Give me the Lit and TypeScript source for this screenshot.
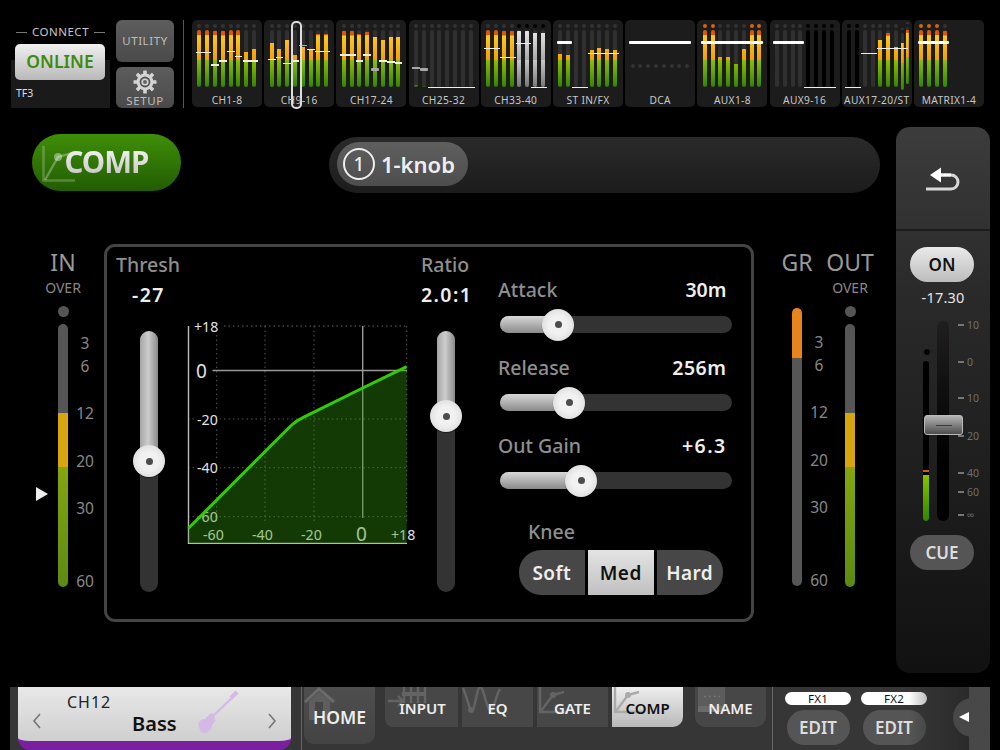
import { LitElement, html, css, svg } from "lit";
import { customElement } from "lit/decorators.js";

type Fader = [number, number, number, number?, number?]; // col, span, y(3x), thick, gray
interface Strip { name: string; tops: (number | null)[]; faders: Fader[]; kinds?: string; dots?: string; narrow?: boolean; sel?: boolean; dca?: boolean; }

const strips: Strip[] = [
  { name: "CH1-8", tops: [90, 90, 93, 92, 90, 90, 155, 147], faders: [[0, 2, 157], [2, 1, 195], [3, 1, 183], [4, 1, 154], [5, 1, 169], [6, 2, 183]] },
  { name: "CH9-16", tops: [127, 147, 120, 165, 141, 149, 102, 102], faders: [[0, 1, 178], [1, 1, 172], [2, 1, 191], [3, 1, 183], [4, 1, 136, 0, 1], [5, 1, 148], [6, 2, 154]], sel: true },
  { name: "CH17-24", tops: [92, 92, 102, 96, 109, 120, 109, 109], faders: [[0, 2, 165], [2, 1, 183], [3, 1, 165], [4, 1, 209, 1, 1], [5, 1, 183], [6, 1, 186], [7, 1, 189]] },
  { name: "CH25-32", tops: [255, 258, null, null, null, null, null, null], faders: [[0, 1, 204, 0, 1], [1, 1, 209, 1, 1], [2, 6, 262]] },
  { name: "CH33-40", tops: [90, 90, 92, 92, 92, 92, 97, 97], kinds: "....wwww", dots: "....kkkk", faders: [[0, 2, 145], [2, 2, 172], [4, 2, 130], [6, 2, 262]] },
  { name: "ST IN/FX", tops: [162, 165, null, null, 148, 142, 147, 150], faders: [[0, 2, 128, 1], [2, 2, 262], [4, 4, 160]] },
  { name: "DCA", tops: [], faders: [[0, 8, 128, 1]], dca: true },
  { name: "AUX1-8", tops: [90, 90, 171, 171, 190, 147, 90, 90], dots: "oo....oo", faders: [[0, 8, 128, 1]] },
  { name: "AUX9-16", tops: [null, null, null, null, null, null, null, null], kinds: "....kkkk", dots: "....kkkk", faders: [[0, 4, 128, 1], [4, 4, 262]] },
  { name: "AUX17-20/ST", tops: [null, null, null, null, 120, 97, 141, 120, 97], kinds: "kk.......", dots: "kk.......", narrow: true, faders: [[0, 2, 262], [2, 2, 160], [4, 4, 145]] },
  { name: "MATRIX1-4", tops: [90, 90, 90, 92], dots: "ooo.", faders: [[0, 4, 128, 1]] },
];

const ticks = [
  ["10", 4], ["0", 41], ["10", 77], ["20", 115], ["40", 152], ["60", 171], ["∞", 194],
] as [string, number][];

const grScale = [["3", 19], ["6", 42], ["12", 89], ["20", 137], ["30", 184], ["60", 257]] as [string, number][];

@customElement("app-root")
export class AppRoot extends LitElement {
  static styles = css`
    :host { display: block; width: 1000px; height: 750px; background: #000; overflow: hidden; font-family: "Noto Sans", "Open Sans", sans-serif; color: #fff; }
    .root { width: 1000px; height: 750px; display: flex; flex-direction: column; }
    /* top bar */
    .top { display: flex; height: 88px; padding: 20px 16px 0 11px; flex: none; }
    .connect { width: 99px; height: 88px; display: flex; flex-direction: column; align-items: center; background: linear-gradient(#000 40px, #1a1a1a 40px); position: relative; }
    .conn-label { margin-top: 5px; height: 14px; line-height: 14px; font-size: 11.5px; color: #c8c8c8; letter-spacing: .5px; display: flex; align-items: center; gap: 5px; }
    .conn-label i { display: block; width: 11px; height: 1px; background: #777; }
    .online { margin: 5px 1px 0 0; width: 90px; height: 36px; border-radius: 5px; background: linear-gradient(#f0f0f0, #b9b9b9); color: #3f8a10; font-weight: 600; font-size: 17.5px; line-height: 35px; text-align: center; }
    .tf3 { align-self: flex-start; margin: 6px 0 0 5px; font-size: 10.5px; line-height: 14px; color: #ddd; }
    .utilcol { width: 58px; margin-left: 6px; display: flex; flex-direction: column; gap: 5px; }
    .util { border-radius: 6px; background: linear-gradient(#5d5d5d, #4a4a4a); color: #bdbdbd; font-size: 11.5px; letter-spacing: .6px; text-align: center; }
    .u1 { height: 42px; line-height: 42px; }
    .u2 { height: 41px; display: flex; flex-direction: column; align-items: center; line-height: 13px; }
    .u2 svg { margin-top: 3px; display: block; }
    .vsep { width: 1px; height: 88px; background: #555; margin: 0 8px 0 9px; }
    .strips { flex: 1; display: grid; grid-template-columns: repeat(11, 1fr); gap: 2.2px; }
    .tile { position: relative; height: 87px; background: #1c1c1c; border-radius: 5px; box-sizing: border-box; padding: 4px 0 0 5.4px; }
    .cols { display: flex; gap: 3.8px; height: 63px; }
    .col { width: 4px; flex: none; display: flex; flex-direction: column; align-items: center; }
    .dot { width: 4px; height: 4px; border-radius: 50%; background: #333; flex: none; }
    .dot.k { background: #000; }
    .dot.o { background: #d9620a; }
    .dca-dot { margin-top: 39.7px; }
    .m { margin-top: 2px; width: 4px; height: 57px; border-radius: 2px; background: #303030; position: relative; overflow: hidden; flex: none; }
    .m.k { background: #000; }
    .m i { position: absolute; left: 0; right: 0; bottom: 0; display: block; background: linear-gradient(to top, #338400 0, #8cc000 27px, #f2a000 27px, #ffc820 51px, #d95a05 52px, #d95a05 57px) bottom / 100% 57px no-repeat; }
    .m.w i { background: linear-gradient(to top, #777 0, #c8c8c8 27px, #a8a8a8 27px, #e8e8e8 57px) bottom / 100% 57px no-repeat; }
    .col.n { width: 2.6px; }
    .col.n .m { width: 2.6px; }
    .col.n .dot { width: 2.6px; height: 2.6px; margin-top: .7px; margin-bottom: .7px; }
    .col.n2 { margin-left: -1.2px; }
    .col.n1 { margin-left: -.8px; }
    .fad { position: absolute; background: #eee; height: 1.5px; }
    .fad.t { height: 3.4px; background: #fff; border-radius: 1px; }
    .fad.g { background: #a8a8a8; }
    .sel { position: absolute; left: 27px; top: .5px; width: 7px; height: 84px; border: 2px solid #ddd; border-radius: 5px; box-sizing: content-box; }
    .tname { position: absolute; left: 0; right: 0; top: 72px; text-align: center; font-size: 10.2px; line-height: 16px; letter-spacing: .35px; color: #c8c8c8; white-space: nowrap; }
    /* main */
    .main { flex: none; height: 579px; display: flex; }
    .left { width: 896px; display: flex; flex-direction: column; }
    .hdr { height: 137px; display: flex; align-items: flex-start; flex: none; box-sizing: border-box; padding: 26px 0 0 32px; }
    .comp { position: relative; width: 149px; height: 57px; border-radius: 29px; background: linear-gradient(#3f8f08, #225c03); flex: none; }
    .comp svg { position: absolute; left: 0; top: 0; }
    .comp b { position: absolute; left: 32.5px; top: 7px; font-size: 29.5px; line-height: 42px; font-weight: 700; letter-spacing: -1px; background: linear-gradient(#fff, #bbb); -webkit-background-clip: text; background-clip: text; color: transparent; }
    .pill { margin: 3px 0 0 148px; width: 551px; height: 56px; border-radius: 28px; background: linear-gradient(#2a2a2a, #1c1c1c); box-sizing: border-box; padding: 5px 8px; }
    .knobbtn { width: 131px; height: 44px; border-radius: 22px; background: linear-gradient(#5f5f5f, #4d4d4d); display: flex; align-items: center; padding-left: 6px; box-sizing: border-box; gap: 6px; font-size: 22px; font-weight: 600; color: #eee; }
    .ring { width: 28px; height: 28px; border: 2px solid #eee; border-radius: 50%; text-align: center; line-height: 28px; font-size: 19px; font-weight: 500; }
    .body { display: flex; height: 376px; }
    .vucol { display: flex; flex-direction: column; align-items: center; flex: none; position: relative; }
    .vu-in { width: 62px; margin-left: 32px; margin-right: 10px; }
    .vu-gr { width: 53px; margin-left: 16.5px; }
    .vu-out { width: 53px; }
    .gr-gap { height: 33px; flex: none; }
    .big { font-size: 23px; line-height: 26px; margin-top: 4px; color: #999; }
    .over { font-size: 14px; line-height: 18px; margin-top: 4px; color: #888; }
    .ovd { width: 11px; height: 11px; border-radius: 50%; background: #555; margin-top: 9px; flex: none; }
    .vu { margin-top: 7px; width: 10px; height: 263px; border-radius: 5px; overflow: hidden; flex: none; background: linear-gradient(#565656 89px, #d6a50f 89px, #d6a50f 143px, #84a510 143px, #5c8a12 263px); }
    .vuwrap { position: relative; width: 10px; }
    .sc { position: absolute; left: 15px; width: 24px; text-align: center; font-size: 15.5px; line-height: 18px; color: #888; transform: translateY(-9px); }
    .vu.gr { margin-top: 0; height: 278px; background: linear-gradient(#e8841c 50px, #565656 50px); }
    .arrow { position: absolute; left: -22px; top: 170px; width: 0; height: 0; border-left: 12px solid #eee; border-top: 7px solid transparent; border-bottom: 7px solid transparent; }
    .panel { width: 650px; height: 378px; margin-top: -1px; box-sizing: border-box; border: 3px solid #444; border-radius: 11px; flex: none; display: flex; padding-left: 9px; }
    .p-col { flex: none; display: flex; flex-direction: column; }
    .p-lab { font-size: 19.5px; line-height: 24px; color: #8f8f8f; font-weight: 500; white-space: nowrap; }
    .p-val { font-size: 19.5px; line-height: 24px; color: #eee; font-weight: 600; letter-spacing: .5px; white-space: nowrap; }
    .p-val.wide { letter-spacing: 1.4px; }
    .p-val.tight { letter-spacing: 0; }
    .c-th { width: 66px; }
    .c-ra { width: 50px; margin-left: 11px; }
    .c-ri { width: 234px; margin-left: 27px; padding-top: 31px; }
    .top-lab { margin-top: 6px; }
    .th-val { margin: 6px 0 24px 16px; }
    .ra-val { margin: 6px 0 24px 0; }
    .th-sl { margin-left: 24px; }
    .ra-sl { margin-left: 16px; }
    .g-wrap { margin: 79px 0 0 6px; flex: none; width: 222px; }
    .g-wrap svg { overflow: visible; display: block; font-family: inherit; }
    .vs { position: relative; width: 18px; height: 261px; border-radius: 9px; background: #333; flex: none; }
    .vs .fill { position: absolute; left: 0; right: 0; top: 0; border-radius: 9px 9px 0 0; background: linear-gradient(90deg, #a5a5a5, #cdcdcd 45%, #8a8a8a); }
    .knob { position: absolute; width: 32px; height: 32px; border-radius: 50%; background: radial-gradient(circle at 50% 50%, #f1f1f1 40%, #e4e4e4 65%, #c6c6c6); transform: translate(-50%, -50%); box-shadow: 0 1px 1px #0006; display: flex; align-items: center; justify-content: center; }
    .knob::after { content: ""; display: block; width: 7px; height: 7px; border-radius: 50%; background: #4c4c4c; }
    .hs { position: relative; width: 232px; height: 17px; border-radius: 8.5px; background: #333; margin: 14px 0 0 2px; }
    .hs .fill { position: absolute; left: 0; top: 0; bottom: 0; border-radius: 8.5px 0 0 8.5px; background: linear-gradient(#d8d8d8, #8a8a8a); }
    .hrow { display: flex; justify-content: space-between; padding-right: 5.5px; }
    .hrow.next { margin-top: 23px; }
    .knee-lab { margin: 31px 0 0 30px; }
    .knee { display: flex; margin: 6px 0 0 21px; gap: 3.5px; height: 45px; }
    .knee div { width: 65.5px; text-align: center; line-height: 46px; font-size: 19px; font-weight: 600; letter-spacing: .4px; background: #474747; color: #eee; }
    .knee .a { border-radius: 22px 0 0 22px; }
    .knee .b { background: linear-gradient(#e4e4e4, #c0c0c0); color: #111; }
    .knee .c { border-radius: 0 22px 22px 0; }
    /* side */
    .side { width: 94px; height: 546px; margin-top: 19px; border-radius: 14px; background: linear-gradient(#3c3c3c, #2a2a2a 30%, #111); display: flex; flex-direction: column; align-items: center; flex: none; }
    .back { height: 102px; box-sizing: border-box; padding-top: 4px; display: flex; align-items: center; justify-content: center; flex: none; width: 94px; }
    .sdiv { width: 94px; height: 2px; background: #1c1c1c; flex: none; }
    .on { margin: 16px 2px 0 0; width: 64px; height: 35px; border-radius: 18px; background: linear-gradient(#eaeaea, #bdbdbd); color: #111; text-align: center; line-height: 35px; font-size: 17px; font-weight: 600; flex: none; }
    .sval { margin-top: 6px; font-size: 14.5px; line-height: 18px; color: #e6e6e6; letter-spacing: .2px; }
    .fadbox { position: relative; width: 94px; height: 200px; margin-top: 15px; flex: none; }
    .fdot { position: absolute; left: 27.5px; top: 28px; width: 6px; height: 6px; border-radius: 50%; background: #000; }
    .fmeter { position: absolute; left: 27px; top: 40px; width: 6px; height: 160px; border-radius: 3px; background: #000; overflow: hidden; }
    .fmeter i { position: absolute; left: 0; right: 0; bottom: 0; height: 46px; display: block; background: linear-gradient(#86c400, #338400); }
    .fmeter u { position: absolute; left: 0; right: 0; bottom: 49px; height: 2px; display: block; background: #c9600d; }
    .ftrack { position: absolute; left: 41px; top: 0; width: 12px; height: 200px; border-radius: 6px; background: linear-gradient(#201e1e, #000 70%); }
    .cap { position: absolute; left: 28px; top: 94px; width: 39px; height: 20px; box-sizing: border-box; border: 1.5px solid #bbb; border-radius: 3px; background: linear-gradient(#b5b5b5, #4d4d4d); display: flex; align-items: center; justify-content: center; }
    .cap::after { content: ""; display: block; width: 16px; height: 1px; background: #3d3d3d; }
    .tk { position: absolute; left: 62px; display: flex; align-items: center; gap: 3px; font-size: 10.5px; line-height: 12px; color: #6f6f6f; transform: translateY(-6px); }
    .tk i { display: block; width: 6px; height: 2px; background: #777; }
    .cue { margin: 14px 2px 0 0; width: 64px; height: 35px; border-radius: 18px; background: #555; color: #ddd; text-align: center; line-height: 36px; font-size: 17px; font-weight: 600; flex: none; }
    /* bottom */
    .bar { margin-left: 10px; width: 980px; height: 63px; flex: none; display: flex; background: #363636; position: relative; overflow: hidden; }
    .select { margin-left: 8px; width: 273px; height: 63px; box-sizing: border-box; border-radius: 0 0 12px 12px; background: linear-gradient(#e8e8e8, #cfcfcf); border-bottom: 9px solid #7a1fa0; position: relative; color: #111; flex: none; display: flex; align-items: center; justify-content: space-between; padding: 14px 14px 0; }
    .names { flex: 1; align-self: stretch; margin-top: -14px; display: flex; flex-direction: column; }
    .n1 { margin: 3px 0 0 25px; font-size: 16px; line-height: 24px; letter-spacing: 1px; color: #222; }
    .n2 { margin: -3px 0 0 90px; font-size: 20px; line-height: 26px; font-weight: 600; }
    .gtr { position: absolute; left: 178px; top: 0; }
    .b-sep { width: 1px; height: 63px; background: #666; flex: none; }
    .sep1 { margin-left: 10px; }
    .sep2 { margin-left: 6px; }
    .home { margin-left: 2px; position: relative; width: 71px; height: 57px; border-radius: 0 0 10px 10px; background: linear-gradient(#4e4e4e, #444); flex: none; font-size: 17.5px; font-weight: 600; text-align: center; line-height: 60px; color: #eee; }
    .home span, .tab span { position: relative; }
    .ic { position: absolute; left: 0; top: 0; }
    .tabs { margin-left: 10px; display: flex; gap: 4px; flex: none; }
    .tab { position: relative; width: 71px; height: 40px; background: #474747; font-size: 15px; font-weight: 600; color: #eee; text-align: center; line-height: 43px; }
    .tab.first { width: 73px; border-radius: 0 0 0 8px; padding-left: 2px; box-sizing: border-box; }
    .tab.active { background: linear-gradient(#eee, #b9b9b9); color: #111; border-radius: 0 0 10px 0; }
    .tab.nm { margin-left: 12px; border-radius: 0 0 10px 10px; flex: none; }
    .fx { width: 66px; margin-left: 12px; display: flex; flex-direction: column; align-items: center; flex: none; }
    .fx + .fx { margin-left: 10px; }
    .fxp { margin-top: 5px; width: 66px; height: 13px; border-radius: 7px; background: #fff; color: #111; font-size: 11.5px; line-height: 14px; text-align: center; letter-spacing: .3px; }
    .edit { margin-top: 5px; width: 63px; height: 35px; border-radius: 18px; background: #555; color: #ddd; text-align: center; line-height: 35px; font-size: 17px; font-weight: 600; }
    .handle { position: absolute; right: 0; top: 0; width: 21px; height: 63px; background: #484848; }
    .shade { position: absolute; right: 21px; top: 0; width: 60px; height: 63px; background: linear-gradient(90deg, transparent, #2a2a2a); }
    .circle { position: absolute; right: -2px; top: 11px; width: 39px; height: 39px; border-radius: 50%; background: #484848; }
    .tri { position: absolute; right: 21px; top: 24.5px; width: 0; height: 0; border-right: 10px solid #fff; border-top: 5.5px solid transparent; border-bottom: 5.5px solid transparent; }
  `;

  private strip(s: Strip) {
    const n = s.dca ? 8 : s.tops.length;
    const narrowStart = s.narrow ? 7 : 99;
    const cols = Array.from({ length: n }, (_, i) => {
      if (s.dca) return html`<div class="col"><div class="dot dca-dot"></div></div>`;
      const top = s.tops[i];
      const kind = s.kinds?.[i] ?? ".";
      const d = s.dots?.[i] ?? ".";
      const cls = i >= narrowStart ? (i === narrowStart ? "col n n1" : "col n n2") : "col";
      return html`<div class=${cls}>
        <div class="dot ${d === "." ? "" : d}"></div>
        <div class="m ${kind === "." ? "" : kind}">${top === null ? "" : html`<i style="height:${((260 - top) / 3).toFixed(1)}px"></i>`}</div>
      </div>`;
    });
    return html`<div class="tile">
      <div class="cols">${cols}</div>
      ${s.faders.map(([c, span, y, thick, gray]) => html`<div class="fad ${thick ? "t" : ""} ${gray ? "g" : ""}"
        style="left:${(3.7 + 7.8 * c).toFixed(1)}px;width:${(7.8 * span).toFixed(1)}px;top:${(y / 3 - 20 - (thick ? 1.7 : 0.75)).toFixed(1)}px"></div>`)}
      ${s.sel ? html`<div class="sel"></div>` : ""}
      <div class="tname">${s.name}</div>
    </div>`;
  }

  private gear() {
    const teeth = Array.from({ length: 8 }, (_, i) => svg`<rect x="10.2" y="0.5" width="3.6" height="5" rx=".6" fill="#d4d4d4" transform="rotate(${i * 45} 12 12)"/>`);
    return html`<svg width="24" height="24" viewBox="0 0 24 24">${teeth}<circle cx="12" cy="12" r="8.4" fill="#d4d4d4"/><circle cx="12" cy="12" r="5.4" fill="#555"/><circle cx="12" cy="12" r="3.6" fill="#d4d4d4"/><circle cx="12" cy="12" r="2" fill="#666"/></svg>`;
  }

  private graph() {
    const vLines = [216.7, 265, 314, 406.7];
    const hLines = [419, 467.7, 516.7];
    const lab = "#e2e2e2";
    return html`<svg width="222" height="220" viewBox="188 326 222 220">
      ${vLines.map((x) => svg`<line x1=${x} x2=${x} y1="326" y2="522" stroke="#555" stroke-width="1" stroke-dasharray="1.5 3"/>`)}
      ${hLines.map((y) => svg`<line x1="188" x2="407" y1=${y} y2=${y} stroke="#555" stroke-width="1" stroke-dasharray="1.5 3"/>`)}
      <line x1="224" x2="407" y1="326" y2="326" stroke="#666" stroke-dasharray="1.5 3"/>
      <line x1="188.5" x2="188.5" y1="326" y2="544" stroke="#bbb" stroke-width="1.4"/>
      <line x1="212.5" x2="407" y1="370.5" y2="370.5" stroke="#999" stroke-width="1.4"/>
      <line x1="362.7" x2="362.7" y1="326" y2="518" stroke="#999" stroke-width="1.4"/>
      <line x1="188" x2="407" y1="543.4" y2="543.4" stroke="#ccc" stroke-width="1.4"/>
      <g fill=${lab} font-size="14.2">
        <rect x="190" y="320" width="33" height="14" fill="#000"/>
        <text x="194" y="332">+18</text>
        <rect x="190" y="361" width="22" height="20" fill="#000"/>
        <text x="196" y="377.5" font-size="19">0</text>
        <rect x="194" y="411" width="26" height="16" fill="#000"/>
        <text x="197" y="424.5">-20</text>
        <rect x="194" y="460" width="26" height="16" fill="#000"/>
        <text x="197" y="473">-40</text>
        <text x="197" y="522">-60</text>
        <text x="203" y="540">-60</text>
        <text x="252" y="540">-40</text>
        <text x="301" y="540">-20</text>
        <text x="356" y="541" font-size="19">0</text>
        <text x="391" y="540">+18</text>
      </g>
      <path d="M188.5 528.3 L291.7 425 C295 422 299 419.3 303.3 417.3 L362.7 388 L406.7 366.7 V543.4 H188.5 Z" fill="rgba(51,153,10,.38)"/>
      <path d="M188.5 528.3 L291.7 425 C295 422 299 419.3 303.3 417.3 L362.7 388 L406.7 366.7" fill="none" stroke="#33cc00" stroke-width="3"/>
    </svg>`;
  }

  private vslider(y: number) {
    return html`<div class="vs"><div class="fill" style="height:${y}px"></div><div class="knob" style="left:9px;top:${y}px"></div></div>`;
  }

  private hslider(x: number) {
    return html`<div class="hs"><div class="fill" style="width:${x}px"></div><div class="knob" style="left:${x}px;top:8.5px"></div></div>`;
  }

  render() {
    return html`<div class="root">
      <div class="top">
        <div class="connect">
          <div class="conn-label"><i></i>CONNECT<i></i></div>
          <div class="online">ONLINE</div>
          <div class="tf3">TF3</div>
        </div>
        <div class="utilcol">
          <div class="util u1">UTILITY</div>
          <div class="util u2">${this.gear()}<span>SETUP</span></div>
        </div>
        <div class="vsep"></div>
        <div class="strips">${strips.map((s) => this.strip(s))}</div>
      </div>

      <div class="main">
        <div class="left">
          <div class="hdr">
            <div class="comp">
              <svg width="149" height="57" viewBox="0 0 149 57" fill="none">
                <path d="M11.5 12 V46.5 H43" stroke="#fff" stroke-opacity=".22" stroke-width="2.6"/>
                <path d="M13 46 L26 23 L44 18" stroke="#fff" stroke-opacity=".3" stroke-width="2.4"/>
                <circle cx="26" cy="23" r="4" fill="#fff" fill-opacity=".4"/>
              </svg>
              <b>COMP</b>
            </div>
            <div class="pill"><div class="knobbtn"><div class="ring">1</div>1-knob</div></div>
          </div>
          <div class="body">
            <div class="vucol vu-in">
              <div class="big">IN</div>
              <div class="over">OVER</div>
              <div class="ovd"></div>
              <div class="vuwrap">
                <div class="vu"></div>
                ${grScale.map(([t, y]) => html`<div class="sc" style="top:${y + 7}px">${t}</div>`)}
                <div class="arrow"></div>
              </div>
            </div>
            <div class="panel">
              <div class="p-col c-th">
                <div class="p-lab top-lab">Thresh</div>
                <div class="p-val th-val wide">-27</div>
                <div class="th-sl">${this.vslider(130)}</div>
              </div>
              <div class="g-wrap">${this.graph()}</div>
              <div class="p-col c-ra">
                <div class="p-lab top-lab">Ratio</div>
                <div class="p-val ra-val wide">2.0:1</div>
                <div class="ra-sl">${this.vslider(85)}</div>
              </div>
              <div class="p-col c-ri">
                <div class="hrow"><div class="p-lab">Attack</div><div class="p-val tight">30m</div></div>
                ${this.hslider(58)}
                <div class="hrow next"><div class="p-lab">Release</div><div class="p-val">256m</div></div>
                ${this.hslider(69)}
                <div class="hrow next"><div class="p-lab">Out Gain</div><div class="p-val wide">+6.3</div></div>
                ${this.hslider(81)}
                <div class="p-lab knee-lab">Knee</div>
                <div class="knee"><div class="a">Soft</div><div class="b">Med</div><div class="c">Hard</div></div>
              </div>
            </div>
            <div class="vucol vu-gr">
              <div class="big">GR</div>
              <div class="gr-gap"></div>
              <div class="vuwrap">
                <div class="vu gr"></div>
                ${grScale.map(([t, y]) => html`<div class="sc" style="top:${y + 15}px">${t}</div>`)}
              </div>
            </div>
            <div class="vucol vu-out">
              <div class="big">OUT</div>
              <div class="over">OVER</div>
              <div class="ovd"></div>
              <div class="vuwrap"><div class="vu"></div></div>
            </div>
          </div>
        </div>
        <div class="side">
          <div class="back">
            <svg width="40" height="30" viewBox="0 0 40 30" fill="none">
              <path d="M18 10 H28 A7 7 0 0 1 28 24 H3" stroke="#d8d8d8" stroke-width="3"/>
              <path d="M18 10 H28" stroke="#fff" stroke-width="3"/>
              <path d="M7 10 L18 2.5 V17.5 Z" fill="#fff"/>
            </svg>
          </div>
          <div class="sdiv"></div>
          <div class="on">ON</div>
          <div class="sval">-17.30</div>
          <div class="fadbox">
            <div class="fdot"></div>
            <div class="fmeter"><u></u><i></i></div>
            <div class="ftrack"></div>
            ${ticks.map(([t, y]) => html`<div class="tk" style="top:${y}px"><i></i>${t}</div>`)}
            <div class="cap"></div>
          </div>
          <div class="cue">CUE</div>
        </div>
      </div>

      <div class="bar">
        <div class="select">
          <svg width="10" height="16" viewBox="0 0 10 16" fill="none"><path d="M8 1 L2 8 L8 15" stroke="#777" stroke-width="1.6"/></svg>
          <div class="names">
            <div class="n1">CH12</div>
            <div class="n2">Bass</div>
          </div>
          <svg width="10" height="16" viewBox="0 0 10 16" fill="none"><path d="M2 1 L8 8 L2 15" stroke="#777" stroke-width="1.6"/></svg>
          <svg class="gtr" width="48" height="52" viewBox="196 687 48 52" fill="none">
            <path d="M199 727 C197 722 201 719 205 719 C207 717 209 714 212 713 L214.5 715.5 C214 718 214.5 720 216 720 C214 723 212 724 212 726 C211 730 208 733 204 733 C201 733 200 730 199 727 Z" fill="#d5b8e6"/>
            <path d="M212 717 L233 697" stroke="#d5b8e6" stroke-width="2.4"/>
            <path d="M231 698 L237 692" stroke="#d5b8e6" stroke-width="4"/>
          </svg>
        </div>
        <div class="b-sep sep1"></div>
        <div class="home">
          <svg class="ic" width="71" height="40" viewBox="304 687 71 40" fill="none">
            <path d="M305 702 L319 689 L334 702" stroke="#6a6a6a" stroke-width="3"/>
            <path d="M309 701 L319 692 L330 701 V720 H309 Z" fill="#5e5e5e"/>
            <rect x="315" y="702" width="8" height="18" fill="#454545"/>
          </svg>
          <span>HOME</span>
        </div>
        <div class="tabs">
          <div class="tab first">
            <svg class="ic" width="73" height="40" viewBox="385 687 73 40" fill="none" stroke="#646464" stroke-width="2.4">
              <path d="M388 701 H402 M398 696 L403 701 L398 706"/>
              <path d="M404 687 V703 M411 687 V703 M418 687 V703 M425 687 V703"/>
              <path d="M402 694 H426" stroke-width="4"/>
            </svg>
            <span>INPUT</span>
          </div>
          <div class="tab">
            <svg class="ic" width="71" height="40" viewBox="462 687 71 40" fill="none" stroke="#646464" stroke-width="2.4">
              <path d="M463 688 C468 700 470 712 472 711 C475 710 477 687 480 687 C484 687 487 712 491 711 C494 709 496 695 500 689"/>
              <circle cx="471" cy="710" r="3" fill="#646464" stroke="none"/>
            </svg>
            <span>EQ</span>
          </div>
          <div class="tab">
            <svg class="ic" width="71" height="40" viewBox="537 687 71 40" fill="none" stroke="#646464" stroke-width="2.4">
              <path d="M540 687 V712 H568"/><path d="M541 711 L553 695 L564 692"/>
              <circle cx="553" cy="695" r="3" fill="#646464" stroke="none"/>
            </svg>
            <span>GATE</span>
          </div>
          <div class="tab active">
            <svg class="ic" width="71" height="40" viewBox="612 687 71 40" fill="none" stroke="#aaa" stroke-width="2.4">
              <path d="M615 687 V712 H643"/><path d="M616 711 L628 695 L639 692"/>
              <circle cx="628" cy="695" r="3" fill="#aaa" stroke="none"/>
            </svg>
            <span>COMP</span>
          </div>
        </div>
        <div class="tab nm">
          <svg class="ic" width="71" height="40" viewBox="695 687 71 40" fill="none">
            <rect x="698" y="687" width="27" height="24" fill="#5c5c5c"/>
            <rect x="698" y="706" width="27" height="6" fill="#6a6a6a"/>
            <path d="M704 696.5 H720" stroke="#7a7a7a" stroke-width="1.6" stroke-dasharray="1.6 3.4"/>
          </svg>
          <span>NAME</span>
        </div>
        <div class="b-sep sep2"></div>
        <div class="fx"><div class="fxp">FX1</div><div class="edit">EDIT</div></div>
        <div class="fx"><div class="fxp">FX2</div><div class="edit">EDIT</div></div>
        <div class="shade"></div>
        <div class="handle"></div>
        <div class="circle"></div>
        <div class="tri"></div>
      </div>
    </div>`;
  }
}
